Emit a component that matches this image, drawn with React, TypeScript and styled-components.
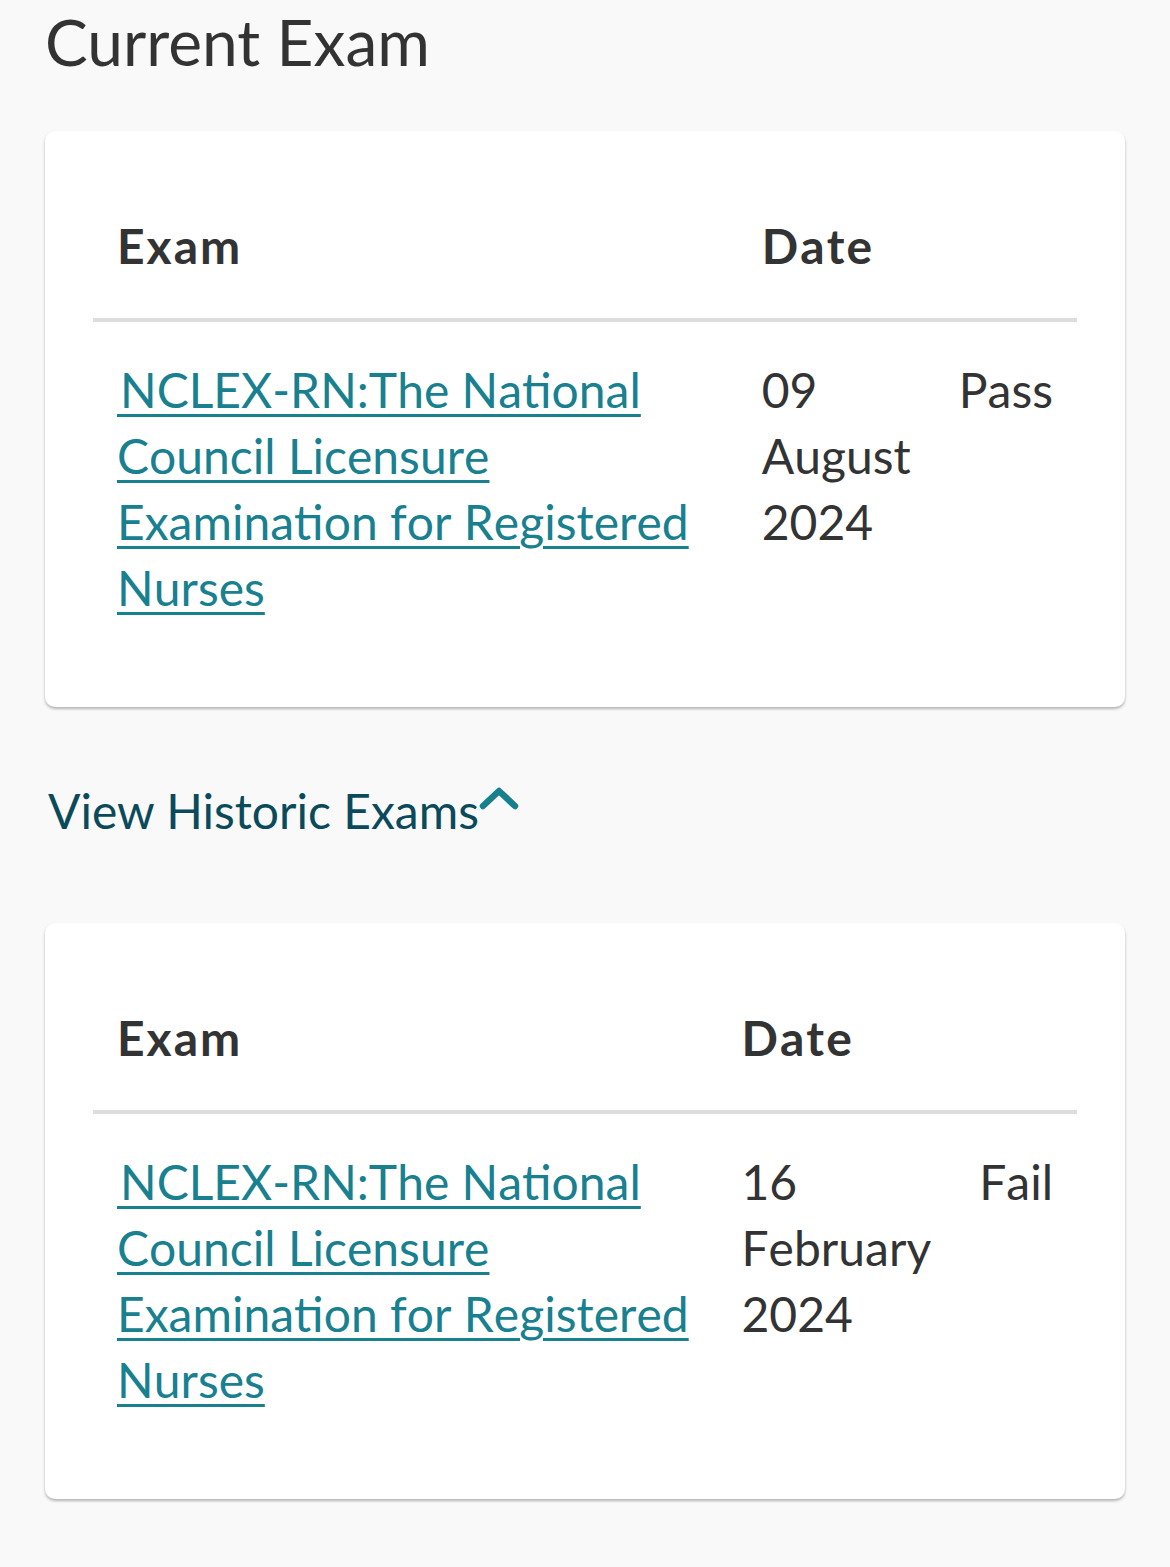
import React from 'react';
import styled, { createGlobalStyle } from 'styled-components';

const GlobalStyle = createGlobalStyle`
  html, body {
    margin: 0;
    padding: 0;
    background: #f9f9f9;
  }
  body {
    font-family: Lato, "Open Sans", sans-serif;
    color: #333333;
  }
`;

interface ExamRecord {
  title: string;
  date: string[];
  result: string;
}

const currentExams: ExamRecord[] = [
  {
    title: 'NCLEX-RN:The National Council Licensure Examination for Registered Nurses',
    date: ['09', 'August', '2024'],
    result: 'Pass',
  },
];

const historicExams: ExamRecord[] = [
  {
    title: 'NCLEX-RN:The National Council Licensure Examination for Registered Nurses',
    date: ['16', 'February', '2024'],
    result: 'Fail',
  },
];

const ExamTable: React.FC<{ exams: ExamRecord[] }> = ({ exams }) => (
  <Card>
    <Table>
      <thead>
        <tr>
          <HeadCell $wide>Exam</HeadCell>
          <HeadCell>Date</HeadCell>
          <HeadCell />
        </tr>
      </thead>
      <tbody>
        {exams.map((exam, i) => (
          <tr key={i}>
            <Cell $wide>
              <ExamLink href="#">{'\u200a'}{exam.title}</ExamLink>
            </Cell>
            <Cell>{exam.date.join(' ')}</Cell>
            <Cell>{exam.result}</Cell>
          </tr>
        ))}
      </tbody>
    </Table>
  </Card>
);

const App: React.FC = () => (
  <Page>
    <GlobalStyle />
    <Title>Current Exam</Title>
    <ExamTable exams={currentExams} />
    <Toggle type="button">
      View Historic Exams
      <svg width="42" height="28" viewBox="0 0 42 28" aria-hidden="true">
        <path
          d="M4 20 L20 5 L36 20"
          fill="none"
          stroke="#16808e"
          strokeWidth="6.5"
          strokeLinecap="round"
          strokeLinejoin="round"
        />
      </svg>
    </Toggle>
    <ExamTable exams={historicExams} />
  </Page>
);

const Page = styled.div`
  padding: 4px 45px 68px;
`;

const Title = styled.h1`
  margin: 0 0 50px;
  font-size: 64px;
  font-weight: 400;
  line-height: 1.2;
  color: #333333;
`;

const Card = styled.div`
  background: #ffffff;
  border-radius: 10px;
  padding: 48px;
  box-shadow: 0 2px 3px rgba(0, 0, 0, 0.28);
`;

const Table = styled.table`
  width: 100%;
  border-collapse: collapse;
  font-size: 48px;
  line-height: 66px;
  font-kerning: none;
`;

const HeadCell = styled.th<{ $wide?: boolean }>`
  width: ${(p) => (p.$wide ? '100%' : 'auto')};
  padding: 34px 24px 39px;
  text-align: left;
  font-weight: 700;
  letter-spacing: 2px;
  color: #333333;
  border-bottom: 4px solid #dddddd;
`;

const Cell = styled.td<{ $wide?: boolean }>`
  width: ${(p) => (p.$wide ? '100%' : 'auto')};
  padding: 35px 24px 38px;
  vertical-align: top;
  color: #333333;
`;

const ExamLink = styled.a`
  color: #18808f;
  text-decoration: underline;
  text-decoration-thickness: 3px;
  text-underline-offset: 6px;
`;

const Toggle = styled.button`
  display: flex;
  align-items: flex-start;
  margin: 71px 0 79px;
  padding: 0 0 0 3px;
  border: none;
  background: none;
  font-family: inherit;
  font-size: 48px;
  line-height: 66px;
  color: #0b4a5b;
  cursor: pointer;

  svg {
    margin-top: 8px;
  }
`;

export default App;
